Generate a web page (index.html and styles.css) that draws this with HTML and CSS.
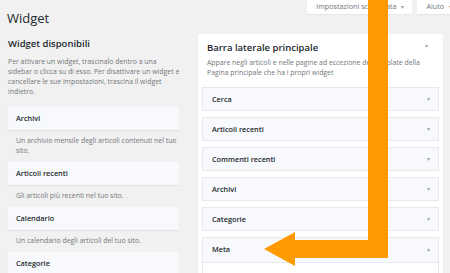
FILE: index.html
```html
<!DOCTYPE html>
<html lang="it">
<head>
  <meta charset="UTF-8">
  <title>Widget</title>
  <link rel="stylesheet" href="styles.css">
</head>
<body>
  <div class="page">
    <div class="header">
      <h1>Widget</h1>
      <div class="meta-links">
        <span class="meta-btn">Impostazioni schermata <i>&#9662;</i></span>
        <span class="meta-btn">Aiuto <i>&#9662;</i></span>
      </div>
    </div>

    <div class="columns">
      <div class="available">
        <h2>Widget disponibili</h2>
        <p class="intro">Per attivare un widget, trascinalo dentro a una sidebar o clicca su di esso. Per disattivare un widget e cancellare le sue impostazioni, trascina il widget indietro.</p>

        <div class="card">Archivi</div>
        <p class="desc">Un archivio mensile degli articoli contenuti nel tuo sito.</p>
        <div class="card">Articoli recenti</div>
        <p class="desc">Gli articoli più recenti nel tuo sito.</p>
        <div class="card">Calendario</div>
        <p class="desc">Un calendario degli articoli del tuo sito.</p>
        <div class="card">Categorie</div>
      </div>

      <div class="sidebar">
        <div class="sidebar-head">
          <h2>Barra laterale principale</h2>
          <i class="toggle">&#9652;</i>
        </div>
        <p class="intro">Appare negli articoli e nelle pagine ad eccezione del template della Pagina principale che ha i propri widget</p>

        <div class="item">Cerca <i>&#9662;</i></div>
        <div class="item">Articoli recenti <i>&#9662;</i></div>
        <div class="item">Commenti recenti <i>&#9662;</i></div>
        <div class="item">Archivi <i>&#9662;</i></div>
        <div class="item">Categorie <i>&#9662;</i></div>
        <div class="item open">
          <div class="item-top">Meta <i>&#9652;</i></div>
          <div class="item-body"></div>
        </div>
      </div>
    </div>
  </div>

  <!-- freccia arancione sopra tutto -->
  <svg class="arrow" width="450" height="273" viewBox="0 0 450 273">
    <polygon points="368,0 388,0 388,258 295,258 295,266 264,249 295,232 295,240 368,240" fill="#ff9a00"/>
  </svg>
</body>
</html>
```

FILE: styles.css
```css
body {
  margin: 0;
  background: #f1f1f1;
  font-family: "Open Sans", "Noto Sans", sans-serif;
  color: #23282d;
  height: 273px;
  overflow: hidden;
  position: relative;
}

.page {
  padding-left: 8px;
}

.header {
  display: flex;
  justify-content: space-between;
  align-items: flex-start;
  height: 34px;
}

h1 {
  margin: 0;
  padding-top: 10px;
  margin-left: -1px;
  font-size: 13px;
  font-weight: 400;
  line-height: 16px;
}

.meta-links {
  display: flex;
  gap: 5px;
  margin-right: -10px;
}

.meta-btn {
  background: #fff;
  color: #72777c;
  font-size: 7.2px;
  height: 14px;
  line-height: 13px;
  padding: 0 8px 0 9px;
  box-shadow: 0 1px 1px rgba(0,0,0,0.04);
}

.meta-btn i {
  font-style: normal;
  font-size: 6px;
  color: #a0a5aa;
  margin-left: 3px;
}

.columns {
  display: flex;
  gap: 19px;
}

.available {
  width: 171px;
}

h2 {
  margin: 0;
  font-size: 9.5px;
  font-weight: 600;
  line-height: 14px;
}

.available h2 {
  margin-top: 3px;
}

.intro {
  margin: 6px -3px 10px 0;
  font-size: 6.9px;
  line-height: 10px;
  color: #72777c;
}

.card {
  height: 23px;
  line-height: 23px;
  padding: 0 8px;
  background: #f7f9fc;
  font-size: 7.3px;
  font-weight: 600;
  box-shadow: 0 1px 1px rgba(0,0,0,0.06);
}

.desc {
  margin: 0;
  padding: 6px 2px 6px 8px;
  font-size: 6.9px;
  line-height: 10px;
  color: #72777c;
}

.sidebar {
  width: 245px;
  background: #fff;
  padding: 0 4px;
  box-sizing: border-box;
  box-shadow: 0 1px 1px rgba(0,0,0,0.04);
  height: 260px;
}

.sidebar-head {
  display: flex;
  justify-content: space-between;
  padding: 7px 5px 0;
}

.sidebar .intro {
  padding: 0 5px;
  margin: 3px 0 9px;
}

.toggle {
  font-style: normal;
  font-size: 6px;
  color: #a0a5aa;
  margin-right: 6px;
}

.item {
  display: flex;
  justify-content: space-between;
  height: 24px;
  line-height: 23px;
  padding: 0 8px 0 9px;
  margin-bottom: 6px;
  background: #f7f9fc;
  border: 1px solid #e6e9ee;
  box-sizing: border-box;
  font-size: 7.3px;
  font-weight: 600;
}

.item i {
  font-style: normal;
  font-size: 6px;
  font-weight: 400;
  color: #a0a5aa;
}

.item.open {
  display: block;
  padding: 0;
  height: auto;
}

.item-top {
  display: flex;
  justify-content: space-between;
  padding: 0 8px 0 9px;
  height: 24px;
}

.item-body {
  background: #fff;
  border-top: 1px solid #e6e9ee;
  height: 40px;
}

.arrow {
  position: absolute;
  left: 0;
  top: 0;
}
```
